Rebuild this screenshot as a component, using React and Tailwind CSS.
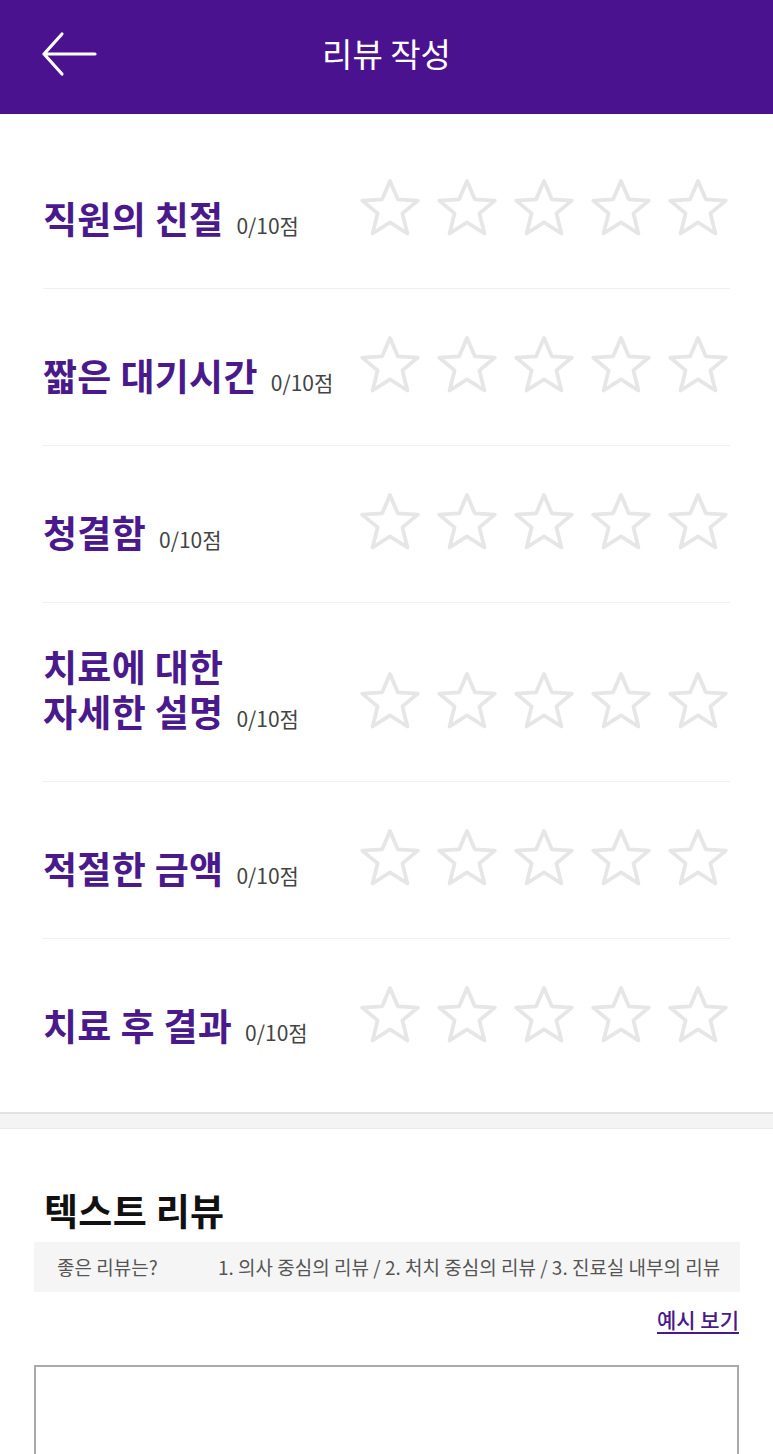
import React from "react";

const items = [
  { title: ["직원의 친절"], score: "0/10점" },
  { title: ["짧은 대기시간"], score: "0/10점" },
  { title: ["청결함"], score: "0/10점" },
  { title: ["치료에 대한", "자세한 설명"], score: "0/10점" },
  { title: ["적절한 금액"], score: "0/10점" },
  { title: ["치료 후 결과"], score: "0/10점" },
];

const Star = () => (
  <svg width="62" height="60" viewBox="0 0 62 60" fill="none">
    <polygon
      points="31,3 38.8,21.3 58.8,22.6 43.4,35.4 48.4,55.5 31,44.4 13.6,55.5 18.6,35.4 3.2,22.6 23.2,21.3"
      stroke="#e6e6e6"
      strokeWidth="3.8"
      strokeLinejoin="round"
    />
  </svg>
);

const RatingRow = ({ item, last }) => {
  const multi = item.title.length > 1;
  return (
    <div
      className={`flex items-end justify-between ${multi ? "pt-[41px]" : "pt-[46px]"} ${
        last ? "pb-[67px]" : "pb-[50px] border-b border-[#f0f0f0]"
      }`}
    >
      <div className="text-[37px] leading-[45px] font-bold text-[#4a1a8c] mb-[-10px] tracking-[0.3px]">
        {item.title.map((line, i) => (
          <div key={i}>
            {line}
            {i === item.title.length - 1 && (
              <span className="ml-[13px] text-[21px] font-normal text-[#444] tracking-normal">{item.score}</span>
            )}
          </div>
        ))}
      </div>
      <div className="flex gap-[15px] mr-[1px]">
        {[0, 1, 2, 3, 4].map((s) => (
          <Star key={s} />
        ))}
      </div>
    </div>
  );
};

export default function App() {
  return (
    <div
      className="w-[773px] h-[1454px] overflow-hidden bg-white"
      style={{ fontFamily: '"Noto Sans CJK KR", "Noto Sans", sans-serif' }}
    >
      <header className="h-[114px] bg-[#4b1290] flex items-center relative">
        <svg className="ml-[41px] mt-[-6px]" width="56" height="48" viewBox="0 0 56 48" fill="none">
          <path d="M3 24 H54 M3 24 L21 4 M3 24 L21 44" stroke="white" strokeWidth="3.2" strokeLinecap="round" strokeLinejoin="round" />
        </svg>
        <h1 className="absolute left-0 right-0 top-[31px] text-center text-[33px] leading-[44px] text-white font-normal">리뷰 작성</h1>
      </header>

      <section className="px-[43px] pt-[18px]">
        {items.map((item, i) => (
          <RatingRow key={i} item={item} last={i === items.length - 1} />
        ))}
      </section>

      <div className="h-[17px] bg-[#f4f4f4] border-t-2 border-[#e2e2e2] border-b border-b-[#ececec]" />

      <section className="px-[34px] pt-[59px]">
        <h2 className="px-[10px] text-[37px] leading-[44px] font-bold text-[#111] tracking-[0.3px]">텍스트 리뷰</h2>
        <div className="mt-[10px] h-[50px] bg-[#f5f5f5] flex items-center pl-[23px] text-[19px] text-[#555] mr-[-1px]">
          <span className="w-[161px]">좋은 리뷰는?</span>
          <span>1. 의사 중심의 리뷰 / 2. 처치 중심의 리뷰 / 3. 진료실 내부의 리뷰</span>
        </div>
        <div className="flex justify-end mt-[12px]">
          <a className="text-[21px] leading-[30px] text-[#4a1a8c] underline underline-offset-4 font-medium">예시 보기</a>
        </div>
        <div className="mt-[31px] h-[200px] border-2 border-[#aaaaaa]" />
      </section>
    </div>
  );
}
